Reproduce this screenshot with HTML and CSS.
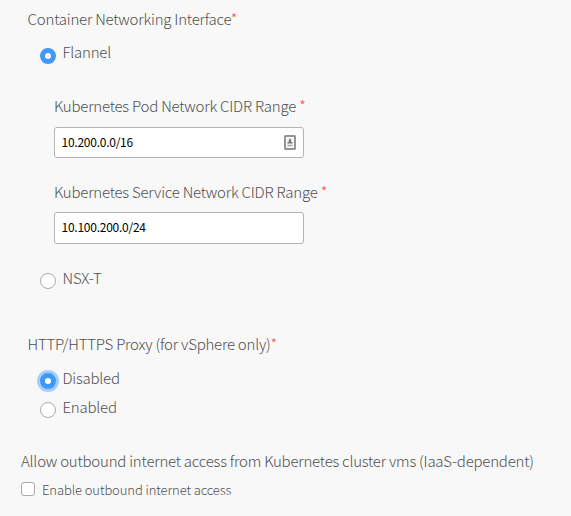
FILE: index.html
```html
<!DOCTYPE html>
<html lang="en">
<head>
<meta charset="utf-8">
<title>Networking</title>
<link rel="stylesheet" href="styles.css">
</head>
<body>
<form class="form">
  <section class="group networking">
    <div class="label">Container Networking Interface<span class="req">*</span></div>
    <label class="choice"><input class="radio" type="radio" name="cni" checked><span>Flannel</span></label>
    <div class="field pod">
      <label class="label" for="pod">Kubernetes Pod Network CIDR Range <span class="req">*</span></label>
      <div class="control">
        <span class="value" id="pod">10.200.0.0/16</span>
        <svg class="autofill" width="12" height="15" viewBox="0 0 12 15"><rect x="1" y="1" width="10" height="13" rx=".5" fill="#f5f5f5" stroke="#949494" stroke-width="2"/><path d="M6 3.200L7.200 5v2H8.500v1.500h-5V7h1.300V5z" fill="#777"/><path d="M3.500 10.500h5" stroke="#aaa" stroke-width="1.500"/></svg>
      </div>
    </div>
    <div class="field service">
      <label class="label" for="service">Kubernetes Service Network CIDR Range <span class="req">*</span></label>
      <div class="control tall"><span class="value" id="service">10.100.200.0/24</span></div>
    </div>
    <label class="choice nsx"><input class="radio" type="radio" name="cni"><span>NSX-T</span></label>
  </section>
  <section class="group proxy">
    <div class="label">HTTP/HTTPS Proxy (for vSphere only)<span class="req">*</span></div>
    <label class="choice"><input class="radio focused" type="radio" name="proxy" checked><span>Disabled</span></label>
    <label class="choice enabled"><input class="radio" type="radio" name="proxy"><span>Enabled</span></label>
  </section>
  <section class="outbound">
    <div class="label">Allow outbound internet access from Kubernetes cluster vms (IaaS-dependent)</div>
    <label class="check"><input class="box" type="checkbox"><span>Enable outbound internet access</span></label>
  </section>
</form>
</body>
</html>
```
FILE: styles.css
```css
* { box-sizing: border-box; }
body {
  margin: 0;
  background: #f8f8f8;
  color: #505050;
  font: 300 15px/21px "Noto Sans CJK SC", "Noto Sans", sans-serif;
  letter-spacing: -0.225px;
}
.form { height: 516px; padding: 8px 0 0 21px; overflow: hidden; }
.group { padding-left: 7px; }
.group > .label { margin-left: -0.4px; }
.label { display: block; white-space: nowrap; }
.req { color: #ff5048; }
.choice { display: flex; align-items: flex-start; height: 21px; margin: 12px 0 0 12px; gap: 6.500px; white-space: nowrap; }
.radio {
  appearance: none;
  flex: none;
  width: 16px;
  height: 16px;
  margin: 7px 0 0;
  border: 1px solid #aaa;
  border-radius: 50%;
  background: #fff;
}
.radio:checked { border: 5px solid #3f98f7; }
.focused { box-shadow: 0 0 0 3px #a3cdfa; }
.field { margin-left: 26px; }
.pod { margin-top: 33px; }
.service { margin-top: 23px; }
.control {
  display: flex;
  align-items: center;
  justify-content: space-between;
  width: 250px;
  height: 31px;
  margin-top: 11px;
  padding: 0 7px 2px 6.500px;
  border: 1px solid #b3b3b3;
  border-radius: 3px;
  background: #fff;
}
.tall { height: 32px; margin-top: 10px; }
.value { color: #000; font-size: 12px; font-weight: 400; line-height: 18px; letter-spacing: -0.25px; }
.autofill { position: relative; top: 1px; }
.nsx { margin-top: 23px; }
.nsx .radio, .proxy .radio { margin-top: 6px; }
.proxy { margin-top: 45px; }
.proxy .choice { margin-top: 13px; }
.proxy .enabled { margin-top: 8px; }
.outbound { margin-top: 33px; }
.check { display: flex; gap: 7px; margin-top: 8px; font-size: 13px; letter-spacing: -0.1px; white-space: nowrap; }
.box {
  appearance: none;
  width: 14px;
  height: 14px;
  margin: 3px 0 0;
  border: 1px solid #aaa;
  border-radius: 3px;
  background: #fff;
}
```
